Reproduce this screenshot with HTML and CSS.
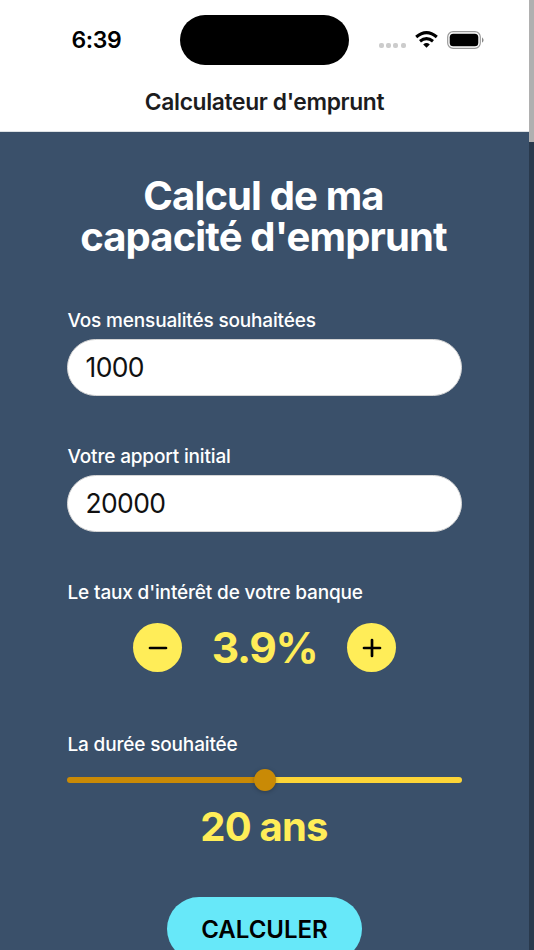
FILE: index.html
```html
<!DOCTYPE html>
<html lang="fr">
<head>
<meta charset="utf-8">
<title>Calculateur d'emprunt</title>
<link rel="stylesheet" href="styles.css">
</head>
<body>
<div class="screen">
  <header class="top">
    <div class="status">
      <span class="time">6:39</span>
      <span class="island"></span>
      <div class="indicators">
        <span class="dots"><i></i><i></i><i></i><i></i></span>
        <svg class="wifi" width="23" height="17" viewBox="0 0 23 17" fill="none" stroke="#000" stroke-width="3.1"><path d="M1.2 6Q11.5-2.6 21.8 6M5 10.2q6.5-5.3 13 0"/><path d="M11.5 16.8 8.2 13.4q3.3-2.6 6.6 0z" fill="#000" stroke="none"/></svg>
        <svg class="battery" width="37" height="18" viewBox="0 0 37 18"><rect x=".7" y=".7" width="32.6" height="16.6" rx="5.4" fill="none" stroke="#999" stroke-width="1.2"/><rect x="2.7" y="2.7" width="28.6" height="12.6" rx="3.5"/><path d="M35 6.2q3.2 2.8 0 5.6z" fill="#888"/></svg>
      </div>
    </div>
    <div class="nav-title">Calculateur d'emprunt</div>
  </header>
  <main class="content">
    <h1>Calcul de ma capacité d'emprunt</h1>
    <label class="label" for="monthly">Vos mensualités souhaitées</label>
    <input class="field" id="monthly" value="1000">
    <label class="label" for="deposit">Votre apport initial</label>
    <input class="field" id="deposit" value="20000">
    <div class="label">Le taux d'intérêt de votre banque</div>
    <div class="stepper">
      <button class="round" aria-label="Diminuer"><svg width="20" height="20" viewBox="0 0 20 20"><path d="M2 10h16"/></svg></button>
      <span class="rate">3.9%</span>
      <button class="round" aria-label="Augmenter"><svg width="20" height="20" viewBox="0 0 20 20"><path d="M2 10h16M10 2v16"/></svg></button>
    </div>
    <div class="label">La durée souhaitée</div>
    <div class="slider"><span class="filled"></span><span class="thumb"></span><span class="rest"></span></div>
    <div class="years">20 ans</div>
    <button class="submit">CALCULER</button>
  </main>
</div>
<div class="scrollbar"><div class="scroll-thumb"></div></div>
</body>
</html>
```
FILE: styles.css
```css
* { box-sizing: border-box; }
body { margin: 0; height: 950px; overflow: hidden; display: flex; font-family: Inter, sans-serif; background: #3a506a; }
.screen { width: 529px; height: 950px; overflow: hidden; }
.top { height: 132px; background: #fff; color: #000; padding-top: 15px; border-bottom: 1px solid #dde1e4; }
.status { height: 50px; display: grid; grid-template-columns: 180px 169px 180px; align-items: center; }
.time { padding-left: 71.5px; font-size: 23px; font-weight: 600; letter-spacing: -.4px; }
.island { height: 50px; border-radius: 25px; background: #000; }
.indicators { display: flex; align-items: center; padding-left: 30px; }
.dots { display: flex; gap: 2.2px; margin: 11px 9.5px 0 0; }
.dots i { width: 5px; height: 5px; border-radius: 2px; background: #ccc; }
.wifi { margin-bottom: 1px; }
.battery { margin-left: 9px; margin-bottom: 1px; }
.nav-title { margin-top: 22px; text-align: center; font-size: 22.8px; line-height: 30px; font-weight: 600; letter-spacing: -.35px; color: #1c1c1e; }
.content { padding: 44px 67px 0; color: #fff; display: flex; flex-direction: column; }
h1 { margin: 0 2px 52px 0; text-align: center; font-size: 40px; line-height: 40.6px; height: 81px; font-weight: 700; letter-spacing: -.86px; }
.label { font-size: 19px; line-height: 24px; font-weight: 450; letter-spacing: -.16px; margin: 0 0 6px .5px; align-self: flex-start; }
.field { width: 395px; height: 57px; border: 1.5px solid #d5d5d5; border-radius: 29px; background: #fff; color: #111; font: 400 26.5px Inter, sans-serif; letter-spacing: -.65px; padding: 0 17.5px 2px; margin: 0 0 49px; outline: 0; }
.stepper { display: flex; align-items: center; justify-content: center; height: 49px; margin: 12px 0 61px; }
.round { width: 49px; height: 49px; border: 0; padding: 0; border-radius: 50%; background: #ffed58; display: grid; place-items: center; }
.round svg { fill: none; stroke: #000; stroke-width: 2.7; stroke-linecap: round; }
.rate { width: 165px; text-align: center; color: #ffed58; font-size: 42.5px; font-weight: 700; letter-spacing: -1.4px; }
.slider { height: 24px; display: flex; align-items: center; margin-top: 5px; }
.filled, .rest { height: 6px; flex: 1; border-radius: 3px 0 0 3px; background: #c98a06; }
.rest { border-radius: 0 3px 3px 0; background: #fdd537; }
.thumb { width: 22px; height: 22px; margin: 0 -1px; border-radius: 50%; background: #c98a06; box-shadow: 0 1px 4px rgba(0, 0, 0, .25); z-index: 1; }
.years { text-align: center; color: #ffed58; font-size: 40px; line-height: 48px; font-weight: 700; letter-spacing: -.8px; margin: 11px 1px 46px 0; }
.submit { align-self: center; width: 195px; height: 64px; flex-shrink: 0; border: 0; border-radius: 32px; background: #67e8f9; color: #000; font: 600 24px Inter, sans-serif; }
.scrollbar { width: 5px; height: 950px; background: #29394c; }
.scroll-thumb { height: 142px; background: #b0b0b0; }
```
